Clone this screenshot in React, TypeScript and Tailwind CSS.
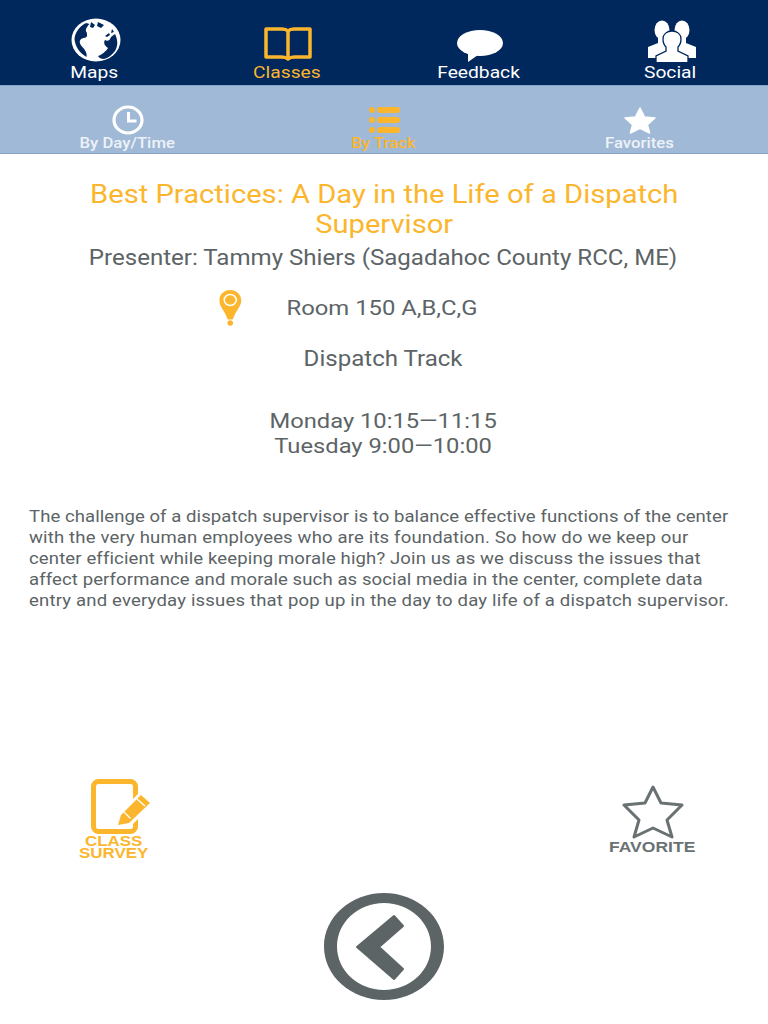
const Globe = () => (
  <svg viewBox="0 0 50 44" className="h-[44px] w-[50px]">
    <ellipse cx="25" cy="22" rx="24.5" ry="21.500" fill="#fff" />
    <path d="M15 5C9 8 4 14 3.500 21c.5 7 5 14 12 18 1-4-2-8-5-11-3-4-2-7 2-8 4 0 4-3 3-6-2-2 1-6 3-8z" fill="#00285c" />
    <path d="M20 4l4 3-2 3-3-1zM27 4l6 3-3 3-4-2zM34 18l4-3 1 2-3 2zM41 11l2 3-3 1z" fill="#00285c" />
    <path d="M44 16c3 6 3 12 0 17-3 4-7 7-11 8-3 0-5-1-6-3 4-1 8-5 10-8-3-2-5-5-3-8 3 2 5 0 6-3z" fill="#00285c" />
  </svg>
);
const Book = () => (
  <svg viewBox="0 0 48 36" className="h-[36px] w-[48px]" fill="none" stroke="#fbb62e" strokeWidth="3.500" strokeLinejoin="round">
    <path d="M2 3h16c3 0 5 1 6 2 1-1 3-2 6-2h16v28H31c-3 0-6 1-7 2-1-1-4-2-7-2H2z" />
    <path d="M24 5v28" />
  </svg>
);
const Bubble = () => (
  <svg viewBox="0 0 46 32" className="h-[32px] w-[46px]" fill="#fff">
    <ellipse cx="23" cy="13" rx="23" ry="13" />
    <path d="M11 22l0 10 10-7z" />
  </svg>
);
const People = () => (
  <svg viewBox="0 0 48 42" className="h-[42px] w-[48px]">
    <g fill="#fff">
      <ellipse cx="14" cy="10" rx="7.500" ry="9.500" />
      <path d="M10 18h8v5l6 4v11H0V27l10-4z" />
      <ellipse cx="34" cy="10" rx="7.500" ry="9.500" />
      <path d="M30 18h8v5l10 4v11H24V27l6-4z" />
    </g>
    <g fill="#fff" stroke="#00285c" strokeWidth="1.300">
      <path d="M8 43v-7l10-5v-4c-2-2-3-5-3-8 0-5 4-8 9-8s9 3 9 8c0 3-1 6-3 8v4l10 5v7z" />
    </g>
  </svg>
);
const Clock = () => (
  <svg viewBox="0 0 32 30" className="h-[30px] w-[32px]" fill="none" stroke="#fff">
    <ellipse cx="16" cy="15" rx="14" ry="13" strokeWidth="3.200" />
    <path d="M16.500 7v9h8" strokeWidth="3" />
  </svg>
);
const TrackList = () => (
  <svg viewBox="0 0 31 26" className="h-[26px] w-[31px]" fill="#fbb62e">
    <circle cx="3" cy="3" r="3" /><circle cx="3" cy="13" r="3" /><circle cx="3" cy="23" r="3" />
    <rect x="8" y="0" width="23" height="6" rx="3" /><rect x="8" y="10" width="23" height="6" rx="3" /><rect x="8" y="20" width="23" height="6" rx="3" />
  </svg>
);
const SolidStar = () => (
  <svg viewBox="0 0 32 27" className="h-[27px] w-[32px]" fill="#fff" stroke="#fff" strokeWidth="1.500" strokeLinejoin="round">
    <path d="M16 1l4.600 9 10.400 1-7.600 6.800 2.200 8.200-9.600-4.600-9.600 4.600 2.200-8.200L1 11l10.400-1z" />
  </svg>
);
const Pin = () => (
  <svg viewBox="0 0 22 36" preserveAspectRatio="none" className="h-[36px] w-[19.5px]">
    <path d="M11 0c6 0 11 4.500 11 10.500 0 6-6 11-8.500 19h-5C6 21.500 0 16.500 0 10.500 0 4.500 5 0 11 0z" fill="#fbb62e" />
    <circle cx="11" cy="33" r="2.800" fill="#fbb62e" />
    <ellipse cx="11" cy="10" rx="6" ry="5.500" fill="none" stroke="#fff" strokeWidth="1.500" />
  </svg>
);
const Survey = () => (
  <svg viewBox="0 0 62 56" className="h-[56px] w-[62px]">
    <rect x="2.500" y="2.500" width="42" height="50" rx="5" fill="none" stroke="#fbb62e" strokeWidth="5" />
    <path d="M23 50l4-15 21-21 14 11-21 21z" fill="#fff" />
    <path d="M27 46l3-10 20-20 9 8-21 20z" fill="#fbb62e" />
    <path d="M33 33l6.500 6.500M46 20l8 7" stroke="#fff" strokeWidth="1.300" />
  </svg>
);
const OutlineStar = () => (
  <svg viewBox="0 0 62 54" className="h-[54px] w-[62px]" fill="none" stroke="#6a7173" strokeWidth="3" strokeLinejoin="round">
    <path d="M31 2l8 16 21 2-15 15 5 17-19-9-19 9 5-17L2 20l21-2z" />
  </svg>
);
const Back = () => (
  <svg viewBox="0 0 120 107" className="h-[107px] w-[120px]" fill="#5c6466">
    <path fillRule="evenodd" d="M60 0c33 0 60 24 60 53.500S93 107 60 107 0 83 0 53.500 27 0 60 0zm0 10C34 10 13 29.500 13 53.500S34 97 60 97s47-19.500 47-43.500S86 10 60 10z" />
    <path d="M33 54l37-31 9 10-24 21 24 22-9 10z" stroke="#5c6466" strokeWidth="2" strokeLinejoin="round" />
  </svg>
);

const topItems = [
  { label: "Maps", icon: <Globe />, active: false },
  { label: "Classes", icon: <Book />, active: true },
  { label: "Feedback", icon: <Bubble />, active: false },
  { label: "Social", icon: <People />, active: false },
];
const subItems = [
  { label: "By Day/Time", icon: <Clock />, active: false },
  { label: "By Track", icon: <TrackList />, active: true },
  { label: "Favorites", icon: <SolidStar />, active: false },
];

export default function App() {
  return (
    <div className="flex h-[1024px] w-[768px] flex-col overflow-hidden bg-white font-['Roboto',sans-serif] text-[#5c6466]">
      <nav className="grid h-[85px] shrink-0 grid-cols-4 bg-[#00285c]">
        {topItems.map((i) => (
          <div key={i.label} className={`flex flex-col items-center justify-end pb-[3px] text-[17px] leading-[20px] ${i.active ? "text-[#fbb62e]" : "text-white"}`}>
            <div className="flex h-[42px] items-end">{i.icon}</div>
            <span className="mr-[3px] scale-x-[1.13]">{i.label}</span>
          </div>
        ))}
      </nav>
      <nav className="grid h-[69px] shrink-0 grid-cols-3 border-y border-y-[#87a4ca] bg-[#a0b9d7]">
        {subItems.map((i) => (
          <div key={i.label} className={`flex flex-col items-center justify-end pb-[1px] text-[14.800px] leading-[17px] font-medium ${i.active ? "text-[#fbb62e]" : "text-[#eef2f7]"}`}>
            <div className="flex h-[30px] items-center">{i.icon}</div>
            <span className="mr-[2px] scale-x-[1.13]">{i.label}</span>
          </div>
        ))}
      </nav>
      <main className="flex h-[625px] w-[680px] shrink-0 origin-left scale-x-[1.13] flex-col items-center pt-[25px]">
        <h1 className="w-[560px] text-center text-[25.800px] leading-[30px] text-[#fbb62e]">
          Best Practices: A Day in the Life of a Dispatch Supervisor
        </h1>
        <p className="mt-[6px] mr-[2px] text-[21.300px] leading-[26px]">Presenter: Tammy Shiers (Sagadahoc County RCC, ME)</p>
        <div className="mt-[19px] flex h-[36px] w-full items-center pl-[194px] text-[21.100px]">
          <Pin />
          <span className="ml-[40px]">Room 150 A,B,C,G</span>
        </div>
        <p className="mt-[20px] mr-[2px] text-[21.300px] leading-[26px]">Dispatch Track</p>
        <p className="mt-[37px] mr-[2px] text-center text-[21px] leading-[25px]">
          Monday 10:15—11:15
          <br />
          Tuesday 9:00—10:00
        </p>
        <p className="mt-[47px] w-full px-[25.700px] text-[16.400px] leading-[21px] whitespace-nowrap">
          <span className="block tracking-[0.06px]">The challenge of a dispatch supervisor is to balance effective functions of the center</span>
          <span className="block tracking-[0.14px]">with the very human employees who are its foundation. So how do we keep our</span>
          <span className="block tracking-[0.11px]">center efficient while keeping morale high? Join us as we discuss the issues that</span>
          <span className="block tracking-[0.09px]">affect performance and morale such as social media in the center, complete data</span>
          <span className="block tracking-[0.16px]">entry and everyday issues that pop up in the day to day life of a dispatch supervisor.</span>
        </p>
      </main>
      <div className="flex items-start justify-between pr-[73px] pl-[79px]">
        <div className="flex w-[70px] flex-col items-center text-center font-['Liberation_Sans',sans-serif] text-[15px] leading-[12px] font-bold text-[#fbb62e]">
          <div className="ml-[16px]"><Survey /></div>
          <span className="scale-x-[1.13]">CLASS<br />SURVEY</span>
        </div>
        <div className="mt-[6px] flex w-[85px] flex-col items-center font-['Liberation_Sans',sans-serif] text-[15.500px] leading-[16px] font-bold text-[#6a7173]">
          <OutlineStar />
          <span className="scale-x-[1.13]">FAVORITE</span>
        </div>
      </div>
      <div className="mt-[34px] flex justify-center">
        <Back />
      </div>
    </div>
  );
}
